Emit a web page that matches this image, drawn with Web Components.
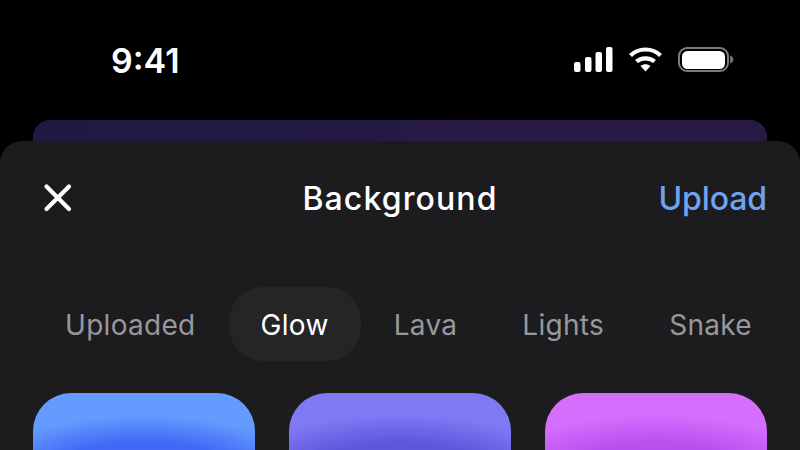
<!DOCTYPE html>
<html>
<head>
<meta charset="utf-8">
<style>
  html, body { margin: 0; height: 100%; background: #000; overflow: hidden; }
  body { font-family: Inter, "Liberation Sans", sans-serif; }
</style>
</head>
<body>
<phone-screen>
  <status-bar slot="status" time="9:41"></status-bar>
  <bottom-sheet slot="sheet">
    <sheet-header slot="header" title="Background" action="Upload"></sheet-header>
    <tab-strip slot="tabs">
      <tab-item>Uploaded</tab-item>
      <tab-item active>Glow</tab-item>
      <tab-item>Lava</tab-item>
      <tab-item>Lights</tab-item>
      <tab-item>Snake</tab-item>
    </tab-strip>
    <tile-grid slot="grid">
      <glow-tile edge="#659bff" core="#4068f4"></glow-tile>
      <glow-tile edge="#8079f4" core="#5c57dc"></glow-tile>
      <glow-tile edge="#d56dfd" core="#b850f0"></glow-tile>
    </tile-grid>
  </bottom-sheet>
</phone-screen>

<script>
  function define(name, css, html, init) {
    customElements.define(name, class extends HTMLElement {
      constructor() {
        super();
        const root = this.attachShadow({ mode: 'open' });
        root.innerHTML = `<style>${css}</style>${html}`;
      }
      connectedCallback() {
        if (init) init(this, this.shadowRoot);
      }
    });
  }

  define('phone-screen', `
    :host { display: block; width: 800px; height: 450px; overflow: hidden; background: #000; }
    .back {
      height: 21px;
      margin: 0 33px;
      border-radius: 17px 17px 0 0;
      background: linear-gradient(90deg, #1f1a42, #271a46 60%, #281a44);
    }
  `, `<slot name="status"></slot><div class="back"></div><slot name="sheet"></slot>`);

  define('status-bar', `
    :host { display: flex; align-items: center; height: 120px; box-sizing: border-box; padding: 0 66px 0 111px; color: #fff; }
    .time { font-size: 34px; font-weight: 600; flex: 1; }
    .icons { display: flex; align-items: center; }
    svg { display: block; }
  `, `
    <span class="time"></span>
    <div class="icons">
      <svg width="161" height="30" viewBox="0 0 161 30">
        <g fill="#fff">
          <rect x="1" y="17" width="6.5" height="10" rx="2"/>
          <rect x="12" y="12" width="6.5" height="15" rx="2"/>
          <rect x="22.5" y="7" width="6.5" height="20" rx="2"/>
          <rect x="33" y="2" width="6.5" height="25" rx="2"/>
        </g>
        <g fill="none" stroke="#fff" stroke-width="4.2">
          <path d="M57.5 10.5 C65.5 2.5 79.5 2.5 87.5 10.5"/>
          <path d="M63.5 16.5 C68 12.2 77 12.2 81.5 16.5"/>
        </g>
        <path d="M67.5 21 C70.5 18.6 74.5 18.6 77.5 21 L72.5 26.5 Z" fill="#fff"/>
        <rect x="106" y="3" width="49" height="23" rx="8" fill="none" stroke="#7c7c7c" stroke-width="2"/>
        <rect x="109" y="6" width="43" height="18" rx="5.5" fill="#fff"/>
        <path d="M157 10.5 C159 11 160.5 12.6 160.5 14.5 C160.5 16.4 159 18 157 18.5 Z" fill="#6f6f6f"/>
      </svg>
    </div>
  `, (el, root) => {
    root.querySelector('.time').textContent = el.getAttribute('time');
  });

  define('bottom-sheet', `
    :host { display: block; height: 309px; background: #1c1c1e; border-radius: 22px 22px 0 0; overflow: hidden; }
  `, `<slot name="header"></slot><slot name="tabs"></slot><slot name="grid"></slot>`);

  define('sheet-header', `
    :host { display: grid; grid-template-columns: 1fr auto 1fr; align-items: center; height: 114px; box-sizing: border-box; padding: 0 33px; }
    button { all: unset; display: block; line-height: 0; margin-left: 10px; }
    .title { font-size: 32px; font-weight: 500; color: #fff; letter-spacing: 1.1px; }
    .action { justify-self: end; font-size: 32px; font-weight: 500; color: #6ea3f3; letter-spacing: -.1px; }
  `, `
    <button aria-label="Close">
      <svg width="30" height="30" viewBox="0 0 30 30" fill="none" stroke="#fff" stroke-width="4.2" stroke-linecap="round">
        <path d="M3.5 3.5 L26 26 M26 3.5 L3.5 26"/>
      </svg>
    </button>
    <span class="title"></span>
    <span class="action"></span>
  `, (el, root) => {
    root.querySelector('.title').textContent = el.getAttribute('title');
    root.querySelector('.action').textContent = el.getAttribute('action');
  });

  define('tab-strip', `
    :host { display: flex; gap: 1px; padding: 32px 0 32px 33px; white-space: nowrap; }
  `, `<slot></slot>`);

  define('tab-item', `
    :host { display: block; height: 74px; line-height: 76px; padding: 0 32px; border-radius: 34px; font-size: 28px; letter-spacing: .3px; color: #98989a; }
    :host([active]) { background: #252527; color: #fff; }
  `, `<slot></slot>`);

  define('tile-grid', `
    :host { display: grid; grid-template-columns: repeat(3, 222px); gap: 34px; padding: 0 33px; }
  `, `<slot></slot>`);

  define('glow-tile', `
    :host { display: block; height: 222px; border-radius: 38px; overflow: hidden; }
    div { height: 100%; background:
      radial-gradient(ellipse 170px 62px at 50% 84px, var(--core) 55%, transparent 100%),
      var(--edge); }
  `, `<div></div>`, (el, root) => {
    const box = root.querySelector('div');
    box.style.setProperty('--edge', el.getAttribute('edge'));
    box.style.setProperty('--core', el.getAttribute('core'));
  });
</script>
</body>
</html>
